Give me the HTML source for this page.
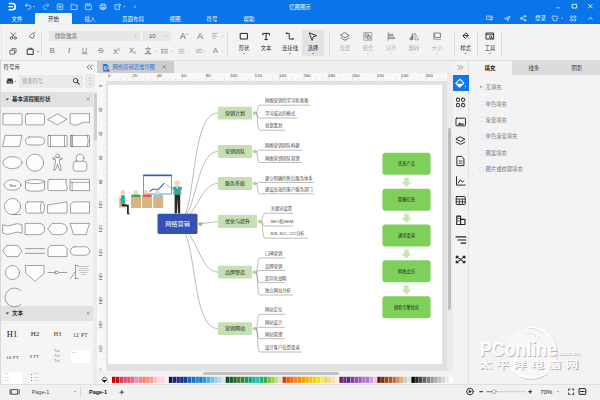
<!DOCTYPE html>
<html lang="zh-CN">
<head>
<meta charset="utf-8">
<title>亿图图示</title>
<style>
html,body{margin:0;padding:0;}
body{width:600px;height:400px;overflow:hidden;background:#f3f3f3;position:relative;
 font-family:"Liberation Sans","Noto Sans CJK SC",sans-serif;font-size:5.5px;color:#333;line-height:1;}
.abs{position:absolute;}
.t,.tl,svg text{opacity:0.99;}
.t{position:absolute;white-space:nowrap;line-height:1;transform:translate(-50%,-50%);}
.tl{position:absolute;white-space:nowrap;line-height:1;transform:translate(0,-50%);}
svg{position:absolute;left:0;top:0;overflow:visible;}
#titlebar{left:0;top:0;width:600px;height:24px;background:#0975e8;}
#ribbon{left:0;top:24px;width:600px;height:37px;background:#f3f3f3;border-bottom:1px solid #dedede;box-sizing:border-box;}
#leftpanel{left:0;top:61px;width:97px;height:323px;background:#f5f5f5;}
#doctabs{left:97px;top:61px;width:356px;height:12px;background:#efefef;}
#canvas{left:97px;top:73px;width:356px;height:298px;background:#e2e2e2;}
#page{left:108px;top:85px;width:334px;height:279px;background:#fff;}
#rightbar{left:453px;top:61px;width:16px;height:323px;background:#f3f3f3;}
#rightpanel{left:469px;top:61px;width:131px;height:323px;background:#f3f3f3;}
#status{left:0;top:384px;width:600px;height:16px;background:#f1f1f1;}
.w{color:#fff;}
.g{color:#777;}
</style>
</head>
<body>

<div class="abs" id="titlebar"></div>
<div class="abs" id="ribbon"></div>
<div class="abs" id="leftpanel"></div>
<div class="abs" id="doctabs"></div>
<div class="abs" id="canvas"></div>
<div class="abs" id="page"></div>
<div class="abs" id="rightbar"></div>
<div class="abs" id="rightpanel"></div>
<div class="abs" id="status"></div>
<div class="abs" style="left:35px;top:13px;width:37px;height:11px;background:#f3f3f3;border-radius:1px 1px 0 0;"></div>
<div class="t" style="left:17px;top:19.60px;font-size:5.5px;color:#fff;">文件</div>
<div class="t" style="left:90px;top:19.60px;font-size:5.5px;color:#fff;">插入</div>
<div class="t" style="left:133px;top:19.60px;font-size:5.5px;color:#fff;">页面布局</div>
<div class="t" style="left:175px;top:19.60px;font-size:5.5px;color:#fff;">视图</div>
<div class="t" style="left:212px;top:19.60px;font-size:5.5px;color:#fff;">符号</div>
<div class="t" style="left:249px;top:19.60px;font-size:5.5px;color:#fff;">帮助</div>
<div class="t" style="left:53.5px;top:19.60px;font-size:5.5px;color:#222;">开始</div>
<div class="t" style="left:300px;top:8.00px;font-size:5.5px;color:#fff;">亿图图示</div>
<div class="t" style="left:540.5px;top:18.90px;font-size:5.5px;color:#fff;">登录</div>
<svg width="600" height="24" viewBox="0 0 600 24" fill="none" stroke="#fff" stroke-width="0.800" stroke-linecap="round" stroke-linejoin="round">
<path d="M9.2 3.6H12.2a3.1 3.1 0 0 1 0 6.2H9.2" stroke-width="1.5"/><path d="M8.8 6.7H12.6" stroke-width="1.3"/>
<path d="M25.6 5.2h3.3a2 2 0 0 1 0 4h-1.2M27 3.6l-1.6 1.6 1.6 1.6" stroke="#cfe1fa"/><path d="M33.2 6.3h1.9l-0.95 1z" fill="#fff" stroke="none"/>
<path d="M48.6 5.2h-3.3a2 2 0 0 0 0 4h1.2M47.2 3.6l1.6 1.6-1.6 1.6" stroke="#a9c9f5"/>
<rect x="57.3" y="4" width="5.6" height="5.6" rx="1" stroke="#cfe1fa"/><path d="M60.1 5.4v2.8M58.7 6.8h2.8" stroke="#cfe1fa"/>
<path d="M71.5 4.3h2.2l0.7 0.9h2.7v4.3h-5.6z" stroke="#cfe1fa"/>
<path d="M85.8 4h4.6l0.9 0.9v4.7h-5.5z M87.2 4v1.8h2.4V4" stroke="#cfe1fa"/>
<path d="M101.4 5.3v-1.4h3.4v1.4M100.3 5.3h5.6v3h-5.6zM101.6 7.3h3v2.2h-3z" stroke="#cfe1fa"/>
<path d="M119.6 6.6v2.8h-4.6V4.6h2.4M117.6 7l2.4-2.6M118.6 4.1h1.6v1.6" stroke="#cfe1fa"/><path d="M123.3 6.3h1.9l-0.95 1z" fill="#fff" stroke="none"/>
<path d="M134 6.2h2M134.4 7.4l0.6 0.6 0.6-0.6" stroke="#a9c9f5" stroke-width="0.7"/>
<path d="M556.800 7.800h2.800" stroke-width="0.800" stroke="#d8e6fb"/><rect x="572.500" y="4.300" width="4.200" height="3.700" stroke-width="0.850"/><path d="M588.600 4.400l3.600 3.600M592.200 4.400l-3.600 3.600" stroke-width="0.800"/>
<path d="M487 16h5.2v3.4h-1v1l-1.2-1h-3z M488.8 17.2h2.6v2.6" stroke="#cfe1fa" stroke-width="0.7"/>
<path d="M505 18.6l5-2.6-2 5-0.8-2z M507.2 19l2.6-2.8" stroke="#cfe1fa" stroke-width="0.7"/>
<circle cx="521.2" cy="18.3" r="0.9" stroke="#cfe1fa"/><circle cx="525" cy="16.3" r="0.9" stroke="#cfe1fa"/><circle cx="525" cy="20.3" r="0.9" stroke="#cfe1fa"/><path d="M522 17.9l2.2-1.2M522 18.8l2.2 1.2" stroke="#cfe1fa" stroke-width="0.7"/>
<path d="M553.2 16l-1.6 1.2 0.8 1.2 0.8-0.4v2.8h3.6v-2.8l0.8 0.4 0.8-1.2-1.6-1.2q-1.8 1-3.6 0z" stroke="#cfe1fa" stroke-width="0.7"/><path d="M561.3 17.8h1.9l-0.95 1z" fill="#fff" stroke="none"/>
<circle cx="571.3" cy="16.8" r="1.1" stroke="#cfe1fa" stroke-width="0.7"/><circle cx="574.7" cy="16.8" r="1.1" stroke="#cfe1fa" stroke-width="0.7"/><circle cx="571.3" cy="20" r="1.1" stroke="#cfe1fa" stroke-width="0.7"/><circle cx="574.7" cy="20" r="1.1" stroke="#cfe1fa" stroke-width="0.7"/>
<path d="M588.6 19.2l1.8-1.8 1.8 1.8" stroke-width="0.9"/>
</svg>
<div class="abs" style="left:1px;top:25px;width:1px;height:35px;background:#e6e6e6;"></div>
<div class="abs" style="left:49px;top:30.5px;width:91px;height:10.5px;background:#e7e7e7;border-radius:1px;"></div>
<div class="abs" style="left:143px;top:30.5px;width:28px;height:10.5px;background:#e7e7e7;border-radius:1px;"></div>
<div class="tl" style="left:54.7px;top:37.00px;font-size:5.6px;color:#7a7a7a;">微软雅黑</div>
<div class="tl" style="left:149px;top:36.00px;font-size:6px;color:#555;">10</div>
<div class="abs" style="left:302px;top:30px;width:22px;height:26px;background:#e3e3e3;"></div>
<div class="abs" style="left:40.6px;top:31px;width:0.8px;height:25px;background:#dcdcdc;"></div>
<div class="abs" style="left:227.1px;top:31px;width:0.8px;height:25px;background:#dcdcdc;"></div>
<div class="abs" style="left:329.1px;top:31px;width:0.8px;height:25px;background:#dcdcdc;"></div>
<div class="abs" style="left:453.6px;top:31px;width:0.8px;height:25px;background:#dcdcdc;"></div>
<div class="abs" style="left:477.1px;top:31px;width:0.8px;height:25px;background:#dcdcdc;"></div>
<div class="abs" style="left:500.6px;top:31px;width:0.8px;height:25px;background:#dcdcdc;"></div>
<div class="t" style="left:244px;top:48.90px;font-size:5.3px;color:#333;">形状</div>
<div class="t" style="left:266px;top:49.10px;font-size:5.3px;color:#333;">文本</div>
<div class="t" style="left:290px;top:48.90px;font-size:5.3px;color:#333;">连接线</div>
<div class="t" style="left:313px;top:48.90px;font-size:5.3px;color:#222;">选择</div>
<div class="t" style="left:345px;top:48.90px;font-size:5.3px;color:#b4b4b4;">位置</div>
<div class="t" style="left:368px;top:48.90px;font-size:5.3px;color:#b4b4b4;">组合</div>
<div class="t" style="left:391px;top:48.90px;font-size:5.3px;color:#b4b4b4;">对齐</div>
<div class="t" style="left:414px;top:48.90px;font-size:5.3px;color:#b4b4b4;">翻转</div>
<div class="t" style="left:437px;top:48.90px;font-size:5.3px;color:#b4b4b4;">大小</div>
<div class="t" style="left:465.5px;top:48.90px;font-size:5.3px;color:#333;">样式</div>
<div class="t" style="left:490px;top:48.90px;font-size:5.3px;color:#333;">工具</div>
<svg width="600" height="61" viewBox="0 0 600 61" fill="none" stroke="#555" stroke-width="0.8" stroke-linecap="round" stroke-linejoin="round">
<path d="M134.6 35.5h2l-1 1.1z M165.4 35.5h2l-1 1.1z" fill="#999" stroke="none"/>
<circle cx="11.3" cy="38" r="1.2"/><circle cx="15.2" cy="38" r="1.2"/><path d="M11.9 37l3.6-4.2M14.6 37l-3.6-4.2"/>
<path d="M29.5 36.2l3.2-3.2 1.8 1.8-1.6 3.6-2.4-1zM33.5 33.6l1.6-1.6"/>
<rect x="10.4" y="50.2" width="4" height="4"/><path d="M12 50.2v-1.6h4v4h-1.6"/>
<path d="M27.6 49.2h5.6v5.2h-5.6z" stroke="#333" stroke-width="1"/><path d="M29.2 49.2v-1h2.4v1" stroke="#333"/><path d="M37 51.3h2l-1 1.1z" fill="#555" stroke="none"/>
<path d="M82 53.700h5.400M97.600 50.600h6.400M145 53.800h6" stroke="#777" stroke-width="0.600"/>
<path d="M212.4 33.4h4.6M212.4 35h3M212.4 36.6h4.6M212.4 38.2h3" stroke="#999" stroke-width="0.6"/><path d="M221.4 35.8h1.8l-0.9 1z" fill="#999" stroke="none"/>
<path d="M163.6 49.4h4M163.6 51.2h4M163.6 53h4" stroke="#888" stroke-width="0.7"/><path d="M161.6 49.4h0.6M161.6 51.2h0.6M161.6 53h0.6" stroke="#555" stroke-width="0.9"/><path d="M171 50.8h1.8l-0.9 1z" fill="#999" stroke="none"/>
<path d="M179 49.4h5M179 51.2h5M179 53h5" stroke="#aaa" stroke-width="0.7"/><path d="M187.6 50.8h1.8l-0.9 1z" fill="#bbb" stroke="none"/>
<path d="M204.2 50.8h1.8l-0.9 1z M221.4 50.8h1.8l-0.9 1z M155.4 50.8h1.8l-0.9 1z" fill="#999" stroke="none"/>
<rect x="240.6" y="33.4" width="6.8" height="5.6" stroke="#222" stroke-width="1"/>
<path d="M262.8 35v-1.6h6.6V35M266.1 33.4v6.2M264.8 39.6h2.6" stroke="#222" stroke-width="1"/>
<path d="M286.8 33.4h2.4v5.6h3.6" stroke="#222" stroke-width="0.9"/><path d="M285.8 32.6h1.4v1.4h-1.4zM292.4 38.2h1.4v1.4h-1.4z" fill="#222" stroke="none"/>
<path d="M309.6 33l7 2.6-3.2 1.2-1.2 3.2z" stroke="#222" stroke-width="0.9"/>
<path d="M243.1 53.300h1.800l-0.900 1z" fill="#333" stroke="none"/>
<path d="M289.1 53.300h1.800l-0.900 1z" fill="#333" stroke="none"/>
<path d="M312.1 53.300h1.800l-0.900 1z" fill="#333" stroke="none"/>
<path d="M344.1 53.300h1.800l-0.900 1z" fill="#bbb" stroke="none"/>
<path d="M367.1 53.300h1.800l-0.900 1z" fill="#bbb" stroke="none"/>
<path d="M390.1 53.300h1.800l-0.900 1z" fill="#bbb" stroke="none"/>
<path d="M413.1 53.300h1.800l-0.900 1z" fill="#bbb" stroke="none"/>
<path d="M436.1 53.300h1.800l-0.900 1z" fill="#bbb" stroke="none"/>
<path d="M464.6 53.300h1.800l-0.900 1z" fill="#333" stroke="none"/>
<path d="M489.1 53.300h1.800l-0.900 1z" fill="#333" stroke="none"/>
<path d="M345 32.800l4.200 2.500-4.200 2.500-4.200-2.500zM340.800 37.800l4.200 2.500 4.200-2.500" stroke="#666" stroke-width="0.850"/>
<rect x="364.2" y="32.6" width="7.6" height="7.6" stroke="#888" stroke-width="0.7"/><rect x="365.6" y="34" width="3" height="3" stroke="#666" stroke-width="0.7"/><rect x="367.4" y="35.8" width="3" height="3" stroke="#666" stroke-width="0.7"/>
<path d="M388.2 32.8v7.4" stroke="#666"/><path d="M389.6 34.2h3.4v1.4h-3.4zM389.6 37.2h5v1.4h-5z" stroke="#666" stroke-width="0.7"/>
<path d="M413 33.4v6.4h-3.2z" fill="#777" stroke="#777" stroke-width="0.5"/><path d="M415 33.4v6.4h3.2z" stroke="#777" stroke-width="0.6"/>
<rect x="435" y="33" width="5.4" height="4.6" stroke="#666" stroke-width="0.8"/><path d="M433.6 33v6.4h7" stroke="#888" stroke-width="0.7"/>
<path d="M463.2 35.6l2.6-2.8 2.6 2.6-2.8 2.6z" stroke="#222" stroke-width="0.9"/><path d="M463.2 35.6h5" stroke="#222" stroke-width="0.9"/><path d="M469 37.4q0.9 1.2 0 1.6q-0.9-0.4 0-1.6z" fill="#222" stroke="none"/>
<rect x="486.4" y="33" width="7.2" height="6" stroke="#222" stroke-width="0.9"/><path d="M486.4 34.6h7.2" stroke="#222" stroke-width="0.7"/><circle cx="490.6" cy="37" r="1.2" stroke="#222" stroke-width="0.7" fill="#f3f3f3"/><path d="M491.5 37.9l1.2 1.2" stroke="#222" stroke-width="0.8"/>
</svg>
<div class="t" style="left:52.2px;top:50.50px;font-size:8px;color:#777;">B</div>
<div class="t" style="left:69.2px;top:50.50px;font-size:8px;color:#666;font-style:italic;">I</div>
<div class="t" style="left:84.6px;top:50.20px;font-size:7px;color:#777;">U</div>
<div class="t" style="left:100.8px;top:50.50px;font-size:7.6px;color:#888;">S</div>
<div class="t" style="left:116.5px;top:51.80px;font-size:7.5px;color:#666;">X<span style="font-size:4px;vertical-align:3px">2</span></div>
<div class="t" style="left:132.5px;top:50.60px;font-size:7.5px;color:#666;">X<span style="font-size:4px;vertical-align:-1.500px">2</span></div>
<div class="t" style="left:148px;top:51.30px;font-size:6.5px;color:#666;">文</div>
<div class="t" style="left:184px;top:36.00px;font-size:8.5px;color:#555;">A<span style="font-size:4px;vertical-align:4px">+</span></div>
<div class="t" style="left:200.7px;top:36.00px;font-size:8.5px;color:#666;">A<span style="font-size:4px;vertical-align:4px">-</span></div>
<div class="t" style="left:199px;top:51.00px;font-size:6.8px;color:#aaa;">ab</div>
<div class="t" style="left:215.5px;top:50.60px;font-size:8px;color:#888;">A</div>
<div class="abs" style="left:0px;top:61px;width:1px;height:323px;background:#d8d8d8;"></div>
<div class="tl" style="left:3.5px;top:67.90px;font-size:5.5px;color:#333;">符号库</div>
<svg width="100" height="400" viewBox="0 0 100 400" fill="none" stroke="#666" stroke-width="0.7" stroke-linecap="round" stroke-linejoin="round">
<path d="M89.200 65l-2 2.200 2 2.200M92.200 65l-2 2.200 2 2.200" stroke="#555" stroke-width="0.800"/>
<path d="M7.4 78.4h5v2h-5zM6.6 80.4h6.6v3h-6.6z" fill="#333" stroke="none"/><path d="M8 82h3.8" stroke="#fff" stroke-width="0.6"/><path d="M14.6 81h1.6l-0.8 0.9z" fill="#555" stroke="none"/>
</svg>
<div class="abs" style="left:18.5px;top:75px;width:64.5px;height:12.5px;background:#eaeaea;border-radius:1px;"></div>
<div class="tl" style="left:22px;top:81.90px;font-size:5.2px;color:#999;">搜索符号</div>
<svg width="100" height="400" viewBox="0 0 100 400" fill="none" stroke="#333" stroke-width="0.9" stroke-linecap="round">
<circle cx="75.6" cy="80.6" r="2.2"/><path d="M77.3 82.3l1.9 1.9" stroke-width="1.1"/>
<rect x="86" y="75" width="8" height="5.6" rx="1.2" stroke="#d4d4d4" stroke-width="0.6" fill="#f0f0f0"/><rect x="86" y="81.6" width="8" height="5.6" rx="1.2" stroke="#d4d4d4" stroke-width="0.6" fill="#f0f0f0"/>
<path d="M88.8 78.5l1.2-1.2 1.2 1.2M88.8 83.8l1.2 1.2 1.2-1.2" stroke="#888" stroke-width="0.6"/>
</svg>
<div class="abs" style="left:1px;top:92px;width:92px;height:15px;background:#e2e2e2;"></div>
<div class="tl" style="left:12px;top:99.50px;font-size:5.5px;color:#333;font-weight:bold;">基本流程图形状</div>
<div class="abs" style="left:1px;top:306px;width:92px;height:15px;background:#e2e2e2;"></div>
<div class="tl" style="left:12px;top:313.50px;font-size:5.5px;color:#333;font-weight:bold;">文本</div>
<div class="abs" style="left:93px;top:92px;width:4px;height:292px;background:#ececec;"></div>
<div class="abs" style="left:93.5px;top:92.5px;width:3px;height:48.5px;background:#d0d0d0;border-radius:1.400px;"></div>
<svg width="100" height="400" viewBox="0 0 100 400" fill="none" stroke="#777" stroke-width="0.6" stroke-linecap="round">
<path d="M5.6 98.4h3.4l-1.7 2.2z M5.6 312.4h3.4l-1.7 2.2z" fill="#444" stroke="none"/>
<path d="M87 98l2.4 2.4M89.400 98l-2.4 2.4 M87 312l2.4 2.4M89.4 312l-2.4 2.4"/>
</svg>
<svg width="100" height="400" viewBox="0 0 100 400" fill="#fdfdfd" stroke="#5a5a5a" stroke-width="0.55" stroke-linejoin="round" stroke-linecap="round">
<g transform="translate(12.5 119.3)"><rect x="-9.5" y="-5.6" width="19" height="11.2" rx="0.8"/></g>
<g transform="translate(35 119.3)"><rect x="-9.5" y="-5.6" width="19" height="11.2" rx="2"/></g>
<g transform="translate(57.5 119.3)"><path d="M-9.5 0L0-5.4 9.5 0 0 5.4z"/></g>
<g transform="translate(80 119.3)"><path d="M-9.5-5.6h19V3.4q-4.5-2-9.5 1t-9.500 0z"/></g>
<g transform="translate(12.5 141)"><path d="M-7-5.6h16.500l-2.500 11.200h-16.500z"/></g>
<g transform="translate(35 141)"><rect x="-9.5" y="-4" width="19" height="8" rx="4"/></g>
<g transform="translate(57.5 141)"><rect x="-9.5" y="-5.6" width="19" height="11.2" rx="0.5"/><path d="M-7-5.6v11.200M7-5.600v11.200"/></g>
<g transform="translate(80 141)"><rect x="-9.5" y="-5.6" width="19" height="11.2" rx="0.5"/><path d="M-8.500-5.600q2 5.600 0 11.200M-7.300-5.600q-2 5.600 0 11.200M7.300-5.600q2 5.600 0 11.200"/></g>
<g transform="translate(12.5 162.7)"><ellipse cx="0" cy="0" rx="9.6" ry="6"/></g>
<g transform="translate(35 162.7)"><circle cx="0" cy="0" r="8.6"/></g>
<g transform="translate(57.5 162.7)"><circle cx="0" cy="-7" r="1.8"/><path d="M-1.600-5h3.200l3 0.500 0 1.200-2.600 0 0 3.300 2 7.500-1.800 0-2.200-6-2.200 6-1.800 0 2-7.500 0-3.300-2.600 0 0-1.200z"/></g>
<g transform="translate(80 162.7)"><circle cx="0" cy="-4.500" r="4"/><rect x="-6.800" y="-1.500" width="13.600" height="10" rx="2.800"/></g>
<g transform="translate(12.5 185)"><ellipse cx="0" cy="0" rx="8.400" ry="5.200"/></g>
<g transform="translate(35 185)"><path d="M-9.500-3.400v7.400q0 2.200 9.500 2.200t9.500-2.200v-7.400"/><ellipse cx="0" cy="-3.400" rx="9.500" ry="2"/></g>
<g transform="translate(57.5 185)"><path d="M-8-5.600h17q-1.600 2.800 0 5.600t0 5.600h-17q-1.600 0-1.600-1.600v-8q0-1.600 1.600-1.600z"/></g>
<g transform="translate(80 185)"><rect x="-9.500" y="-5.600" width="19" height="11.200"/><path d="M-9.500-2.600h19M-7.800-2.600v8.200" stroke-width="0.500"/></g>
<g transform="translate(12.5 207.5)"><circle cx="0" cy="-1" r="8"/><path d="M0 7h8"/></g>
<g transform="translate(35 207.5)"><path d="M-7.500-5.600h15q2 0 2 5.600t-2 5.600h-15q-2 0-2-5.600t2-5.600z"/><path d="M7.500-5.600q-2 0-2 5.600t2 5.600"/></g>
<g transform="translate(57.5 207.5)"><path d="M-9.500-2.600l19-3v11.200h-19z"/></g>
<g transform="translate(80 207.5)"><path d="M-6.500-5.600h16v11.200h-19v-8.200z"/></g>
<g transform="translate(12.5 229)"><path d="M-9.500-4.200q4.500 2.400 9.500 0t9.500 0v8.400q-4.500-2.400-9.500 0t-9.500 0z"/></g>
<g transform="translate(35 229)"><path d="M-9.500-5.600h13q6 0 6 5.600t-6 5.600h-13z"/></g>
<g transform="translate(57.5 229)"><path d="M-5-5.600h9q5.500 1.600 5.500 5.600t-5.500 5.600h-9l-4.500-5.600z"/></g>
<g transform="translate(80 229)"><path d="M-9.500-5.600h19l-3.500 11.200h-12z"/></g>
<g transform="translate(12.5 251)"><path d="M-5.500-5.600h11l4 5.600-4 5.600h-11l-4-5.600z"/></g>
<g transform="translate(35 251)"><path d="M-9.500-2.400h19M-9.500 2.400h19" fill="none"/></g>
<g transform="translate(57.5 251)"><path d="M-6.500-5.600h13l3 3v8.200h-19v-8.200z"/></g>
<g transform="translate(80 251)"><rect x="-9.500" y="-4.200" width="19" height="8.400" rx="4.200"/></g>
<g transform="translate(12.5 272.5)"><circle cx="0" cy="0" r="7"/></g>
<g transform="translate(35 272.5)"><path d="M-9-7h18v8l-9 8-9-8z"/></g>
<g transform="translate(57.5 272.5)"><path d="M-9.500 0h7.500M1.500 0h8" fill="none"/><path d="M-2-1.400l2.500 0.400q1 1 0 2l-2.500 0.400z"/></g>
<g transform="translate(80 272.5)"><path d="M-4.500-7v13M-4.500-7h2.500M-4.500 6h2.500M-9.500 6l5-7" fill="none"/></g>
<g transform="translate(12.5 296)"><path d="M8.500-5.500a9.500 9.500 0 1 0 0 14" fill="none"/></g>
</svg>
<div class="t" style="left:12.5px;top:185.70px;font-size:4.4px;color:#333;">Yes</div>
<div class="t" style="left:83.5px;top:266.80px;font-size:1.9px;color:#666;">Use this side</div>
<div class="t" style="left:83.5px;top:268.80px;font-size:1.9px;color:#666;">bracket to</div>
<div class="t" style="left:83.5px;top:270.80px;font-size:1.9px;color:#666;">add notes to</div>
<div class="t" style="left:83.5px;top:272.80px;font-size:1.9px;color:#666;">your flow-</div>
<div class="t" style="left:83.5px;top:274.80px;font-size:1.9px;color:#666;">chart.</div>
<div class="t" style="left:12px;top:334.20px;font-size:8.5px;color:#111;font-family:'Liberation Serif','Noto Serif CJK SC',serif;">H1</div>
<div class="t" style="left:35px;top:334.00px;font-size:7px;color:#222;font-family:'Liberation Serif','Noto Serif CJK SC',serif;">H2</div>
<div class="t" style="left:57.5px;top:334.00px;font-size:6px;color:#333;font-family:'Liberation Serif','Noto Serif CJK SC',serif;">H3</div>
<div class="t" style="left:80.5px;top:335.80px;font-size:5.6px;color:#333;font-family:'Liberation Serif','Noto Serif CJK SC',serif;letter-spacing:0.300px;">12 PT</div>
<div class="t" style="left:12.5px;top:358.10px;font-size:4.8px;color:#333;font-family:'Liberation Serif','Noto Serif CJK SC',serif;letter-spacing:0.300px;">10 PT</div>
<div class="t" style="left:34.5px;top:357.00px;font-size:4.4px;color:#333;font-family:'Liberation Serif','Noto Serif CJK SC',serif;letter-spacing:0.300px;">9 PT</div>
<div class="t" style="left:57px;top:352.30px;font-size:3.2px;color:#777;font-family:'Liberation Serif','Noto Serif CJK SC',serif;">Text</div>
<div class="t" style="left:57px;top:357.00px;font-size:3.2px;color:#777;font-family:'Liberation Serif','Noto Serif CJK SC',serif;">Text</div>
<div class="t" style="left:57px;top:361.50px;font-size:3.2px;color:#777;font-family:'Liberation Serif','Noto Serif CJK SC',serif;">Text</div>
<div class="abs" style="left:71px;top:349.5px;width:19px;height:13.5px;background:#fff;"></div>
<div class="t" style="left:74px;top:352.80px;font-size:2.4px;color:#777;font-family:'Liberation Serif','Noto Serif CJK SC',serif;">Text</div>
<div class="abs" style="left:2.5px;top:371.5px;width:19px;height:12px;background:#fff;"></div>
<div class="t" style="left:6.5px;top:374.40px;font-size:2.6px;color:#777;font-family:'Liberation Serif','Noto Serif CJK SC',serif;">Text</div>
<div class="t" style="left:6.5px;top:377.60px;font-size:2.6px;color:#777;font-family:'Liberation Serif','Noto Serif CJK SC',serif;">Text</div>
<div class="t" style="left:6.5px;top:380.80px;font-size:2.6px;color:#777;font-family:'Liberation Serif','Noto Serif CJK SC',serif;">Text</div>
<div class="t" style="left:36.5px;top:374.40px;font-size:2.8px;color:#888;font-family:'Liberation Serif','Noto Serif CJK SC',serif;">Text</div>
<div class="abs" style="left:30.6px;top:374px;width:0.8px;height:0.8px;background:#444;border-radius:50%;"></div>
<div class="t" style="left:36.5px;top:377.60px;font-size:2.8px;color:#888;font-family:'Liberation Serif','Noto Serif CJK SC',serif;">Text</div>
<div class="abs" style="left:30.6px;top:377.2px;width:0.8px;height:0.8px;background:#444;border-radius:50%;"></div>
<div class="t" style="left:36.5px;top:380.80px;font-size:2.8px;color:#888;font-family:'Liberation Serif','Noto Serif CJK SC',serif;">Text</div>
<div class="abs" style="left:30.6px;top:380.4px;width:0.8px;height:0.8px;background:#444;border-radius:50%;"></div>
<div class="abs" style="left:97px;top:61px;width:76.5px;height:11.5px;background:#cdcdcd;"></div>
<svg width="600" height="80" viewBox="0 0 600 80">
<path d="M103.200 64h3.400l1.800 1.800v5.600h-5.200z" fill="#1a73e8"/><path d="M104.600 66.600h1.400a1.300 1.300 0 0 1 0 2.800h-1.400z" fill="none" stroke="#fff" stroke-width="0.700"/><circle cx="108.600" cy="70.600" r="1.100" fill="#e02020"/>
<path d="M162.800 65.400l3 3M165.800 65.400l-3 3" stroke="#555" stroke-width="0.600" fill="none"/>
</svg>
<div class="tl" style="left:112.5px;top:68.40px;font-size:5.3px;color:#1a73e8;">网络营销思维导图</div>
<div class="abs" style="left:105.5px;top:73px;width:341.5px;height:7.5px;background:#f8f8f8;"></div>
<div class="abs" style="left:97px;top:73px;width:8.5px;height:298px;background:#f8f8f8;"></div>
<div class="abs" style="left:97px;top:73px;width:8.5px;height:7.5px;background:#f4f4f4;"></div>
<svg width="600" height="400" viewBox="0 0 600 400" fill="none" stroke="#c8c8c8" stroke-width="0.400">
<path d="M108.50 73.500v7M114.61 78.200v2.300M120.71 78.200v2.300M126.81 78.200v2.300M132.92 73.500v7M139.03 78.200v2.300M145.13 78.200v2.300M151.24 78.200v2.300M157.34 73.500v7M163.44 78.200v2.300M169.55 78.200v2.300M175.66 78.200v2.300M181.76 73.500v7M187.87 78.200v2.300M193.97 78.200v2.300M200.07 78.200v2.300M206.18 73.500v7M212.29 78.200v2.300M218.39 78.200v2.300M224.50 78.200v2.300M230.60 73.500v7M236.71 78.200v2.300M242.81 78.200v2.300M248.92 78.200v2.300M255.02 73.500v7M261.12 78.200v2.300M267.23 78.200v2.300M273.34 78.200v2.300M279.44 73.500v7M285.55 78.200v2.300M291.65 78.200v2.300M297.75 78.200v2.300M303.86 73.500v7M309.97 78.200v2.300M316.07 78.200v2.300M322.18 78.200v2.300M328.28 73.500v7M334.38 78.200v2.300M340.49 78.200v2.300M346.60 78.200v2.300M352.70 73.500v7M358.81 78.200v2.300M364.91 78.200v2.300M371.02 78.200v2.300M377.12 73.500v7M383.23 78.200v2.300M389.33 78.200v2.300M395.44 78.200v2.300M401.54 73.500v7M407.65 78.200v2.300M413.75 78.200v2.300M419.86 78.200v2.300M425.96 73.500v7M432.06 78.200v2.300M438.17 78.200v2.300M444.28 78.200v2.300M98 85.30h7.500M103 91.26h2.500M103 97.22h2.500M103 103.19h2.500M98 109.15h7.500M103 115.11h2.500M103 121.08h2.500M103 127.04h2.500M98 133.00h7.500M103 138.96h2.500M103 144.93h2.500M103 150.89h2.500M98 156.85h7.500M103 162.81h2.500M103 168.78h2.500M103 174.74h2.500M98 180.70h7.500M103 186.66h2.500M103 192.62h2.500M103 198.59h2.500M98 204.55h7.500M103 210.51h2.500M103 216.48h2.500M103 222.44h2.500M98 228.40h7.500M103 234.36h2.500M103 240.32h2.500M103 246.29h2.500M98 252.25h7.500M103 258.21h2.500M103 264.18h2.500M103 270.14h2.500M98 276.10h7.500M103 282.06h2.500M103 288.03h2.500M103 293.99h2.500M98 299.95h7.500M103 305.91h2.500M103 311.88h2.500M103 317.84h2.500M98 323.80h7.500M103 329.76h2.500M103 335.73h2.500M103 341.69h2.500M98 347.65h7.500M103 353.61h2.500M103 359.58h2.500"/>
</svg>
<div class="tl" style="left:108.3px;top:76.00px;font-size:4.2px;color:#444;">0</div>
<div class="tl" style="left:132.72px;top:76.00px;font-size:4.2px;color:#444;">20</div>
<div class="tl" style="left:157.14px;top:76.00px;font-size:4.2px;color:#444;">40</div>
<div class="tl" style="left:181.56px;top:76.00px;font-size:4.2px;color:#444;">60</div>
<div class="tl" style="left:205.98px;top:76.00px;font-size:4.2px;color:#444;">80</div>
<div class="tl" style="left:230.4px;top:76.00px;font-size:4.2px;color:#444;">100</div>
<div class="tl" style="left:254.82px;top:76.00px;font-size:4.2px;color:#444;">120</div>
<div class="tl" style="left:279.24px;top:76.00px;font-size:4.2px;color:#444;">140</div>
<div class="tl" style="left:303.66px;top:76.00px;font-size:4.2px;color:#444;">160</div>
<div class="tl" style="left:328.08px;top:76.00px;font-size:4.2px;color:#444;">180</div>
<div class="tl" style="left:352.5px;top:76.00px;font-size:4.2px;color:#444;">200</div>
<div class="tl" style="left:376.92px;top:76.00px;font-size:4.2px;color:#444;">220</div>
<div class="tl" style="left:401.34px;top:76.00px;font-size:4.2px;color:#444;">240</div>
<div class="tl" style="left:425.76px;top:76.00px;font-size:4.2px;color:#444;">260</div>
<div class="t" style="left:100.8px;top:86.20px;font-size:4.2px;color:#444;transform:translate(-50%,-50%) rotate(-90deg);">0</div>
<div class="t" style="left:100.8px;top:110.05px;font-size:4.2px;color:#444;transform:translate(-50%,-50%) rotate(-90deg);">20</div>
<div class="t" style="left:100.8px;top:133.90px;font-size:4.2px;color:#444;transform:translate(-50%,-50%) rotate(-90deg);">40</div>
<div class="t" style="left:100.8px;top:157.75px;font-size:4.2px;color:#444;transform:translate(-50%,-50%) rotate(-90deg);">60</div>
<div class="t" style="left:100.8px;top:181.60px;font-size:4.2px;color:#444;transform:translate(-50%,-50%) rotate(-90deg);">80</div>
<div class="t" style="left:100.8px;top:205.45px;font-size:4.2px;color:#444;transform:translate(-50%,-50%) rotate(-90deg);">100</div>
<div class="t" style="left:100.8px;top:229.30px;font-size:4.2px;color:#444;transform:translate(-50%,-50%) rotate(-90deg);">120</div>
<div class="t" style="left:100.8px;top:253.15px;font-size:4.2px;color:#444;transform:translate(-50%,-50%) rotate(-90deg);">140</div>
<div class="t" style="left:100.8px;top:277.00px;font-size:4.2px;color:#444;transform:translate(-50%,-50%) rotate(-90deg);">160</div>
<div class="t" style="left:100.8px;top:300.85px;font-size:4.2px;color:#444;transform:translate(-50%,-50%) rotate(-90deg);">180</div>
<div class="t" style="left:100.8px;top:324.70px;font-size:4.2px;color:#444;transform:translate(-50%,-50%) rotate(-90deg);">200</div>
<div class="t" style="left:100.8px;top:348.55px;font-size:4.2px;color:#444;transform:translate(-50%,-50%) rotate(-90deg);">220</div>
<div class="abs" style="left:447px;top:73px;width:6px;height:298px;background:#ececec;"></div>
<div class="abs" style="left:448.3px;top:128px;width:2.8px;height:182px;background:#bdbdbd;border-radius:1.400px;"></div>
<div class="abs" style="left:104px;top:371px;width:343px;height:5.5px;background:#ececec;"></div>
<div class="abs" style="left:202.5px;top:371.8px;width:136px;height:3.4px;background:#c2c2c2;border-radius:1.700px;"></div>
<div class="abs" style="left:97px;top:371px;width:356px;height:13px;background:#f1f1f1;z-index:0;"></div>
<div class="abs" style="left:202.5px;top:371.8px;width:136px;height:3.4px;background:#c2c2c2;border-radius:1.700px;"></div>
<div class="abs" style="left:97px;top:376.5px;width:356px;height:7px;background:#f8f8f8;"></div>
<svg width="600" height="400" viewBox="0 0 600 400" shape-rendering="auto">
<rect x="112.00" y="376.800" width="3.450" height="6.100" fill="#c00000"/>
<rect x="115.79" y="376.800" width="3.450" height="6.100" fill="#d9001b"/>
<rect x="119.58" y="376.800" width="3.450" height="6.100" fill="#c8446a"/>
<rect x="123.37" y="376.800" width="3.450" height="6.100" fill="#d95070"/>
<rect x="127.16" y="376.800" width="3.450" height="6.100" fill="#e8566a"/>
<rect x="130.95" y="376.800" width="3.450" height="6.100" fill="#e86a88"/>
<rect x="134.74" y="376.800" width="3.450" height="6.100" fill="#e890b0"/>
<rect x="138.53" y="376.800" width="3.450" height="6.100" fill="#f08496"/>
<rect x="142.32" y="376.800" width="3.450" height="6.100" fill="#f08080"/>
<rect x="146.11" y="376.800" width="3.450" height="6.100" fill="#f89272"/>
<rect x="149.90" y="376.800" width="3.450" height="6.100" fill="#f0a0a0"/>
<rect x="153.69" y="376.800" width="3.450" height="6.100" fill="#f8c0c0"/>
<rect x="157.48" y="376.800" width="3.450" height="6.100" fill="#f0d8e8"/>
<rect x="161.27" y="376.800" width="3.450" height="6.100" fill="#ffd2e0"/>
<rect x="165.06" y="376.800" width="3.450" height="6.100" fill="#ffe8f0"/>
<rect x="168.85" y="376.800" width="3.450" height="6.100" fill="#0a1a50"/>
<rect x="172.64" y="376.800" width="3.450" height="6.100" fill="#1a2a70"/>
<rect x="176.43" y="376.800" width="3.450" height="6.100" fill="#2c2a84"/>
<rect x="180.22" y="376.800" width="3.450" height="6.100" fill="#103080"/>
<rect x="184.01" y="376.800" width="3.450" height="6.100" fill="#1040a0"/>
<rect x="187.80" y="376.800" width="3.450" height="6.100" fill="#2060b0"/>
<rect x="191.59" y="376.800" width="3.450" height="6.100" fill="#2070c0"/>
<rect x="195.38" y="376.800" width="3.450" height="6.100" fill="#3080d0"/>
<rect x="199.17" y="376.800" width="3.450" height="6.100" fill="#0a80d0"/>
<rect x="202.96" y="376.800" width="3.450" height="6.100" fill="#20a0e0"/>
<rect x="206.75" y="376.800" width="3.450" height="6.100" fill="#40b0f0"/>
<rect x="210.54" y="376.800" width="3.450" height="6.100" fill="#70c0f0"/>
<rect x="214.33" y="376.800" width="3.450" height="6.100" fill="#90d0f0"/>
<rect x="218.12" y="376.800" width="3.450" height="6.100" fill="#b0d8f4"/>
<rect x="221.91" y="376.800" width="3.450" height="6.100" fill="#d0e8f8"/>
<rect x="225.70" y="376.800" width="3.450" height="6.100" fill="#0c4a2a"/>
<rect x="229.49" y="376.800" width="3.450" height="6.100" fill="#1a5a30"/>
<rect x="233.28" y="376.800" width="3.450" height="6.100" fill="#2a6a3a"/>
<rect x="237.07" y="376.800" width="3.450" height="6.100" fill="#4a7a2a"/>
<rect x="240.86" y="376.800" width="3.450" height="6.100" fill="#2a8a3a"/>
<rect x="244.65" y="376.800" width="3.450" height="6.100" fill="#20a040"/>
<rect x="248.44" y="376.800" width="3.450" height="6.100" fill="#10a080"/>
<rect x="252.23" y="376.800" width="3.450" height="6.100" fill="#20b0a0"/>
<rect x="256.02" y="376.800" width="3.450" height="6.100" fill="#30c0b0"/>
<rect x="259.81" y="376.800" width="3.450" height="6.100" fill="#20b070"/>
<rect x="263.60" y="376.800" width="3.450" height="6.100" fill="#30b050"/>
<rect x="267.39" y="376.800" width="3.450" height="6.100" fill="#80c030"/>
<rect x="271.18" y="376.800" width="3.450" height="6.100" fill="#a0d040"/>
<rect x="274.97" y="376.800" width="3.450" height="6.100" fill="#c0e080"/>
<rect x="278.76" y="376.800" width="3.450" height="6.100" fill="#d0ecd0"/>
<rect x="282.55" y="376.800" width="3.450" height="6.100" fill="#d83a10"/>
<rect x="286.34" y="376.800" width="3.450" height="6.100" fill="#e85a10"/>
<rect x="290.13" y="376.800" width="3.450" height="6.100" fill="#f07010"/>
<rect x="293.92" y="376.800" width="3.450" height="6.100" fill="#f08a30"/>
<rect x="297.71" y="376.800" width="3.450" height="6.100" fill="#f09010"/>
<rect x="301.50" y="376.800" width="3.450" height="6.100" fill="#f8a000"/>
<rect x="305.29" y="376.800" width="3.450" height="6.100" fill="#f8b000"/>
<rect x="309.08" y="376.800" width="3.450" height="6.100" fill="#f8c000"/>
<rect x="312.87" y="376.800" width="3.450" height="6.100" fill="#f8d000"/>
<rect x="316.66" y="376.800" width="3.450" height="6.100" fill="#f8e000"/>
<rect x="320.45" y="376.800" width="3.450" height="6.100" fill="#f8e850"/>
<rect x="324.24" y="376.800" width="3.450" height="6.100" fill="#f8d060"/>
<rect x="328.03" y="376.800" width="3.450" height="6.100" fill="#f8d890"/>
<rect x="331.82" y="376.800" width="3.450" height="6.100" fill="#f8e0b0"/>
<rect x="335.61" y="376.800" width="3.450" height="6.100" fill="#fff0d0"/>
<rect x="339.40" y="376.800" width="3.450" height="6.100" fill="#6a1a7a"/>
<rect x="343.19" y="376.800" width="3.450" height="6.100" fill="#7a2a8a"/>
<rect x="346.98" y="376.800" width="3.450" height="6.100" fill="#5a2a9a"/>
<rect x="350.77" y="376.800" width="3.450" height="6.100" fill="#8040a0"/>
<rect x="354.56" y="376.800" width="3.450" height="6.100" fill="#9a50b0"/>
<rect x="358.35" y="376.800" width="3.450" height="6.100" fill="#a060b0"/>
<rect x="362.14" y="376.800" width="3.450" height="6.100" fill="#c070c0"/>
<rect x="365.93" y="376.800" width="3.450" height="6.100" fill="#9a80d0"/>
<rect x="369.72" y="376.800" width="3.450" height="6.100" fill="#d0a0d8"/>
<rect x="373.51" y="376.800" width="3.450" height="6.100" fill="#e8c8e8"/>
<rect x="377.30" y="376.800" width="3.450" height="6.100" fill="#5a2008"/>
<rect x="381.09" y="376.800" width="3.450" height="6.100" fill="#7a3010"/>
<rect x="384.88" y="376.800" width="3.450" height="6.100" fill="#9a4a18"/>
<rect x="388.67" y="376.800" width="3.450" height="6.100" fill="#a85a20"/>
<rect x="392.46" y="376.800" width="3.450" height="6.100" fill="#c07030"/>
<rect x="396.25" y="376.800" width="3.450" height="6.100" fill="#c89060"/>
<rect x="400.04" y="376.800" width="3.450" height="6.100" fill="#e0b080"/>
<rect x="403.83" y="376.800" width="3.450" height="6.100" fill="#d8d0c8"/>
<rect x="407.62" y="376.800" width="3.450" height="6.100" fill="#e0e0dc"/>
<rect x="411.41" y="376.800" width="3.450" height="6.100" fill="#000000"/>
<rect x="415.20" y="376.800" width="3.450" height="6.100" fill="#2a2a2a"/>
<rect x="418.99" y="376.800" width="3.450" height="6.100" fill="#4a4a4a"/>
<rect x="422.78" y="376.800" width="3.450" height="6.100" fill="#666666"/>
<rect x="426.57" y="376.800" width="3.450" height="6.100" fill="#808080"/>
<rect x="430.36" y="376.800" width="3.450" height="6.100" fill="#999999"/>
<rect x="434.15" y="376.800" width="3.450" height="6.100" fill="#adadad"/>
<rect x="437.94" y="376.800" width="3.450" height="6.100" fill="#c2c2c2"/>
<rect x="441.73" y="376.800" width="3.450" height="6.100" fill="#d6d6d6"/>
<rect x="445.52" y="376.800" width="3.450" height="6.100" fill="#eaeaea"/>
<rect x="449.31" y="376.800" width="3.450" height="6.100" fill="#ffffff"/>
</svg>
<svg width="600" height="400" viewBox="0 0 600 400" fill="none" stroke="#111" stroke-width="0.800" stroke-linejoin="round">
<path d="M101.800 379.800l2.700-2.900 2.700 2.700-2.900 2.700z"/><path d="M102.200 380h5l-2.600 2.300z" fill="#111" stroke="none"/><path d="M108 381.400q0.800 1.100 0 1.500q-0.800-0.400 0-1.500z" fill="#111" stroke="none"/>
<rect x="99.600" y="368.600" width="2" height="1.800" fill="#fff" stroke="#8aa0c0" stroke-width="0.400"/>
</svg>
<div class="abs" style="left:468.4px;top:61px;width:0.8px;height:323px;background:#e2e2e2;"></div>
<div class="abs" style="left:453px;top:75px;width:15.7px;height:16px;background:#0f77ee;"></div>
<div class="abs" style="left:512px;top:61px;width:88px;height:14px;background:#dcdcdc;"></div>
<div class="t" style="left:490px;top:69.40px;font-size:5.4px;color:#222;font-weight:bold;">填充</div>
<div class="t" style="left:534px;top:69.40px;font-size:5.4px;color:#333;">线条</div>
<div class="t" style="left:577px;top:69.40px;font-size:5.4px;color:#333;">阴影</div>
<svg width="600" height="400" viewBox="0 0 600 400" fill="none" stroke="#222" stroke-width="0.800" stroke-linejoin="round" stroke-linecap="round">
<path d="M458.200 65.600l1.800 1.900-1.800 1.900M461 65.600l1.800 1.900-1.800 1.900" stroke="#666" stroke-width="0.750"/>
<g transform="translate(460.400 83.300) scale(1.350) translate(-460.400 -83.300)"><path d="M457 83.400l3-3.200 3 3-3.200 3z" stroke="#fff" stroke-width="0.800"/><path d="M457.400 83.600h5.200l-2.800 2.400z" fill="#fff" stroke="none"/><path d="M464.200 85q0.800 1.100 0 1.500q-0.800-0.400 0-1.500z" fill="#fff" stroke="none"/></g>
<g transform="translate(460.600 102.6) scale(1.280) translate(-460.600 -102.6)" stroke-width="0.750">
<rect x="457.400" y="99.2" width="2.400" height="2.400" rx="0.500"/><rect x="461.400" y="99.2" width="2.400" height="2.400" rx="0.500"/><rect x="457.400" y="103.4" width="2.400" height="2.400" rx="0.500"/><rect x="461.400" y="103.4" width="2.400" height="2.400" rx="0.500"/>
</g>
<g transform="translate(460.600 122) scale(1.280) translate(-460.600 -122)" stroke-width="0.750">
<rect x="457" y="119" width="7.400" height="6" rx="0.600"/><path d="M458.200 124.2l1.600-1.800 1.400 1.200 1-0.800 1.200 1.400z" fill="#222" stroke="none"/>
</g>
<g transform="translate(460.600 141.3) scale(1.280) translate(-460.600 -141.3)" stroke-width="0.750">
<path d="M460.600 137.9l3.400 1.800-3.400 1.800-3.400-1.800zM457.200 141.9l3.400 1.800 3.400-1.800"/>
</g>
<g transform="translate(460.600 161) scale(1.280) translate(-460.600 -161)" stroke-width="0.750">
<path d="M458 157.4h3.400l1.800 1.800v5.400h-5.200z"/><path d="M459.400 161h2.400M459.400 162.6h2.400" stroke-width="0.600"/>
</g>
<g transform="translate(460.600 181) scale(1.280) translate(-460.600 -181)" stroke-width="0.750">
<path d="M457.400 177.6v6.600h6.800"/><path d="M458.800 182.6l1.600-2.600 1.400 1.800 1.400-0.800" stroke-width="0.700"/>
</g>
<g transform="translate(460.600 200.5) scale(1.280) translate(-460.600 -200.5)" stroke-width="0.750">
<rect x="457.200" y="197.4" width="7" height="6.200" rx="0.500"/><path d="M457.200 199.4h7M457.200 201.5h7M459.600 199.4v4.200M462 199.4v4.200" stroke-width="0.600"/>
</g>
<g transform="translate(460.600 220.3) scale(1.280) translate(-460.600 -220.3)" stroke-width="0.750">
<path d="M457.600 217h3v6.600h-3zM460.600 219.6h3.400v4h-3.400" stroke-width="0.900"/><path d="M458.600 218.7h1M458.600 220.7h1" stroke-width="0.600"/>
</g>
<g transform="translate(460.600 240) scale(1.280) translate(-460.600 -240)" stroke-width="0.750">
<path d="M457 237.6h7.600M458.600 240h6M461 242.4h3.600" stroke-width="0.900"/>
</g>
<g transform="translate(460.600 259.5) scale(1.280) translate(-460.600 -259.5)" stroke-width="0.750">
<path d="M457.200 257l6.800 5M457.200 262l6.800-5M457.200 257h1.600M457.200 257v1.400M464 257h-1.600M464 257v1.400M457.200 262h1.600M457.200 262v-1.400M464 262h-1.600M464 262v-1.400" stroke-width="0.800"/>
</g>
</svg>
<div class="abs" style="left:478.5px;top:84.5px;width:5px;height:5px;background:#fcfcfc;border-radius:50%;border:0.500px solid #e2e2e2;box-sizing:border-box;"></div>
<div class="abs" style="left:480.2px;top:86.2px;width:1.6px;height:1.6px;background:#aaa;border-radius:50%;"></div>
<div class="tl" style="left:485.6px;top:88.00px;font-size:5.3px;color:#777;">无填充</div>
<div class="abs" style="left:478.5px;top:100.96px;width:5px;height:5px;background:#fcfcfc;border-radius:50%;border:0.500px solid #e2e2e2;box-sizing:border-box;"></div>
<div class="tl" style="left:485.6px;top:104.92px;font-size:5.3px;color:#777;">单色填充</div>
<div class="abs" style="left:478.5px;top:117.42px;width:5px;height:5px;background:#fcfcfc;border-radius:50%;border:0.500px solid #e2e2e2;box-sizing:border-box;"></div>
<div class="tl" style="left:485.6px;top:120.84px;font-size:5.3px;color:#777;">渐变填充</div>
<div class="abs" style="left:478.5px;top:133.88px;width:5px;height:5px;background:#fcfcfc;border-radius:50%;border:0.500px solid #e2e2e2;box-sizing:border-box;"></div>
<div class="tl" style="left:485.6px;top:137.14px;font-size:5.3px;color:#777;">单色渐变填充</div>
<div class="abs" style="left:478.5px;top:150.34px;width:5px;height:5px;background:#fcfcfc;border-radius:50%;border:0.500px solid #e2e2e2;box-sizing:border-box;"></div>
<div class="tl" style="left:485.6px;top:153.68px;font-size:5.3px;color:#777;">图案填充</div>
<div class="abs" style="left:478.5px;top:166.8px;width:5px;height:5px;background:#fcfcfc;border-radius:50%;border:0.500px solid #e2e2e2;box-sizing:border-box;"></div>
<div class="tl" style="left:485.6px;top:169.90px;font-size:5.3px;color:#777;">图片或纹理填充</div>
<svg width="600" height="400" viewBox="0 0 600 400" fill="none">
<circle cx="531" cy="353" r="25.500" fill="#f7f7f7"/>
<path d="M525.59 327.57A26.00 26.00 0 0 1 555.11 362.74A28.83 28.83 0 0 0 525.59 327.57zM549.06 371.70A26.00 26.00 0 0 1 505.02 353.91A28.88 28.88 0 0 0 549.06 371.70z" fill="#c4c4c4" transform="translate(0.700 0.800)"/>
<path d="M525.59 327.57A26.00 26.00 0 0 1 555.11 362.74A28.83 28.83 0 0 0 525.59 327.57zM549.06 371.70A26.00 26.00 0 0 1 505.02 353.91A28.88 28.88 0 0 0 549.06 371.70z" fill="#fefefe"/>
<circle cx="525.5" cy="332.9" r="0.900" fill="#c9c9c9"/><circle cx="525" cy="332.3" r="0.900" fill="#fefefe"/>
<circle cx="528.8" cy="333.4" r="0.900" fill="#c9c9c9"/><circle cx="528.3" cy="332.8" r="0.900" fill="#fefefe"/>
<circle cx="532.1" cy="334.2" r="0.900" fill="#c9c9c9"/><circle cx="531.6" cy="333.6" r="0.900" fill="#fefefe"/>
<circle cx="535.3" cy="335.4" r="0.900" fill="#c9c9c9"/><circle cx="534.8" cy="334.8" r="0.900" fill="#fefefe"/>
<circle cx="538.5" cy="337" r="0.900" fill="#c9c9c9"/><circle cx="538" cy="336.4" r="0.900" fill="#fefefe"/>
</svg>
<div class="tl" style="left:480.3px;top:349.00px;font-size:20px;color:#fefefe;font-weight:bold;transform:translate(0,-50%) scaleX(0.890);transform-origin:0 50%;text-shadow:0.800px 0.900px 0.500px #b4b4b4;">PConline</div>
<div class="tl" style="left:557.5px;top:352.90px;font-size:6px;color:#fefefe;font-style:italic;font-weight:bold;text-shadow:0.500px 0.600px 0.400px #b4b4b4;">.com.cn</div>
<div class="tl" style="left:478.5px;top:364.70px;font-size:9.5px;color:#fefefe;font-weight:bold;letter-spacing:3.100px;transform:translate(0,-50%) scaleX(1.370);transform-origin:0 50%;text-shadow:0.800px 0.900px 0.500px #b4b4b4;">太平洋电脑网</div>
<div class="abs" style="left:0px;top:383.5px;width:600px;height:0.6px;background:#e0e0e0;"></div>
<div class="t" style="left:40.5px;top:392.90px;font-size:5.5px;color:#444;">Page-1</div>
<div class="t" style="left:98px;top:392.90px;font-size:5.5px;color:#111;font-weight:bold;">Page-1</div>
<div class="t" style="left:546.3px;top:392.80px;font-size:5.8px;color:#111;">70%</div>
<div class="abs" style="left:79.5px;top:386.5px;width:0.6px;height:11px;background:#dcdcdc;"></div>
<svg width="600" height="400" viewBox="0 0 600 400" fill="none" stroke="#222" stroke-width="0.800" stroke-linecap="round" stroke-linejoin="round">
<rect x="11.600" y="389.600" width="6" height="4.600"/><path d="M10 389.600v4.600M19.200 389.600v4.600" stroke-width="0.700"/>
<path d="M74 391.200h2.200l-1.100 1.300z" fill="#777" stroke="none"/>
<path d="M120 392.200h3.600M121.800 390.400v3.600"/>
<circle cx="470" cy="391.500" r="3.300" stroke-width="0.900"/><path d="M469.100 389.900l2.500 1.600-2.500 1.600z" fill="#222" stroke-width="0.300"/>
<path d="M479.800 391.700h2.800" stroke-width="1"/><path d="M528.600 391.700h3.200M530.200 390.100v3.200" stroke-width="0.900"/>
<path d="M487 391.700h38.500" stroke="#c4c4c4" stroke-width="0.800"/><path d="M487 391.700h6" stroke="#666" stroke-width="0.800"/><circle cx="494.200" cy="391.700" r="1.900" fill="#fff" stroke="#777" stroke-width="0.600"/>
<path d="M557.200 391.200h1.800l-0.900 1z" fill="#666" stroke="none"/>
<path d="M568.600 390.400v-1.400h1.400M572.200 389h1.400v1.400M573.600 393v1.400h-1.400M570 394.400h-1.400v-1.400" stroke-width="0.900"/>
<rect x="579" y="388.600" width="6.800" height="5.800" rx="0.500" stroke-width="1"/><path d="M580.600 391.500h3.600" stroke-width="1.100"/>
</svg>
<svg width="600" height="400" viewBox="0 0 600 400" fill="none" font-family="'Liberation Sans','Noto Sans CJK SC',sans-serif">
<g stroke="#6a6a6a" stroke-width="0.450">
<path d="M178 224 C 198 214 189.147 113.1 218 113.1"/>
<path d="M178 224 C 198 214 195.675 151.5 218 151.5"/>
<path d="M178 224 C 198 214 201.115 183.5 218 183.5"/>
<path d="M198 224 L218 221.5"/>
<path d="M178 224 C 198 234 199.806 272.2 218 272.2"/>
<path d="M178 224 C 198 234 190.218 328.6 218 328.6"/>
</g>
<rect x="157.500" y="213.700" width="40" height="20.200" rx="1.600" fill="#3551b5"/>
<text x="177.5" y="226.23" font-size="6.2" fill="#fff" text-anchor="middle">网络营销</text>
<circle cx="200.500" cy="224" r="1.700" fill="#9ccc65" stroke="#6fa044" stroke-width="0.400"/>
<rect x="218" y="106.7" width="34" height="12.800" rx="0.800" fill="#c5e0b3"/>
<text x="235" y="114.90" font-size="5" fill="#222" text-anchor="middle">营销计划</text>
<path d="M252.8 113.1l1.800-1.800 1.800 1.800-1.800 1.800z" fill="#b7dc9c" stroke="#6fa044" stroke-width="0.400"/>
<path d="M256 113.1 C 258 113.1 257 105.2 259.6 105.2 H310" stroke="#6a6a6a" stroke-width="0.450"/>
<text x="264.9" y="102.27" font-size="4.35" fill="#4a4a4a">网络营销的学习和准备</text>
<path d="M256 113.1 C 258 113.1 257 118 259.6 118 H297.5" stroke="#6a6a6a" stroke-width="0.450"/>
<text x="264.9" y="115.07" font-size="4.35" fill="#4a4a4a">学习成功的模式</text>
<path d="M256 113.1 C 258 113.1 257 130.2 259.6 130.2 H285" stroke="#6a6a6a" stroke-width="0.450"/>
<text x="264.9" y="127.27" font-size="4.35" fill="#4a4a4a">创意策划</text>
<rect x="218" y="145.1" width="34" height="12.800" rx="0.800" fill="#c5e0b3"/>
<text x="235" y="153.30" font-size="5" fill="#222" text-anchor="middle">营销团队</text>
<path d="M252.8 151.5l1.800-1.800 1.800 1.800-1.800 1.800z" fill="#b7dc9c" stroke="#6fa044" stroke-width="0.400"/>
<path d="M256 151.5 C 258 151.5 257 150.2 259.6 150.2 H302" stroke="#6a6a6a" stroke-width="0.450"/>
<text x="264.9" y="147.27" font-size="4.35" fill="#4a4a4a">网络营销团队构建</text>
<path d="M256 151.5 C 258 151.5 257 162.5 259.6 162.5 H302" stroke="#6a6a6a" stroke-width="0.450"/>
<text x="264.9" y="159.57" font-size="4.35" fill="#4a4a4a">网络营销团队管理</text>
<rect x="218" y="177.1" width="34" height="12.800" rx="0.800" fill="#c5e0b3"/>
<text x="235" y="185.30" font-size="5" fill="#222" text-anchor="middle">服务系统</text>
<path d="M252.8 183.5l1.800-1.800 1.800 1.800-1.800 1.800z" fill="#b7dc9c" stroke="#6fa044" stroke-width="0.400"/>
<path d="M256 183.5 C 258 183.5 257 182.5 259.6 182.5 H313.7" stroke="#6a6a6a" stroke-width="0.450"/>
<text x="264.9" y="179.57" font-size="4.35" fill="#4a4a4a">建立明确的售后服务体系</text>
<path d="M256 183.5 C 258 183.5 257 193.8 259.6 193.8 H313.7" stroke="#6a6a6a" stroke-width="0.450"/>
<text x="264.9" y="190.87" font-size="4.35" fill="#4a4a4a">建设高效的客户服务部门</text>
<rect x="218" y="215.1" width="39" height="12.800" rx="0.800" fill="#c5e0b3"/>
<text x="237.5" y="223.30" font-size="5" fill="#222" text-anchor="middle">优化与提升</text>
<path d="M257.8 221.5l1.800-1.800 1.800 1.800-1.800 1.800z" fill="#b7dc9c" stroke="#6fa044" stroke-width="0.400"/>
<path d="M261 221.5 C 263 221.5 262 213.2 265.1 213.2 H293" stroke="#6a6a6a" stroke-width="0.450"/>
<text x="270.4" y="210.27" font-size="4.35" fill="#4a4a4a">关键词设置</text>
<path d="M261 221.5 C 263 221.5 262 226 265.1 226 H293" stroke="#6a6a6a" stroke-width="0.450"/>
<text x="270.4" y="223.07" font-size="4.35" fill="#4a4a4a">SEO和SEM</text>
<path d="M261 221.5 C 263 221.5 262 238.2 265.1 238.2 H308" stroke="#6a6a6a" stroke-width="0.450"/>
<text x="270.4" y="235.27" font-size="4.35" fill="#4a4a4a" textLength="33.500" lengthAdjust="spacingAndGlyphs">B2B, B2C, C2C分析</text>
<rect x="218" y="265.8" width="34" height="12.800" rx="0.800" fill="#c5e0b3"/>
<text x="235" y="274.00" font-size="5" fill="#222" text-anchor="middle">品牌塑造</text>
<path d="M252.8 272.2l1.800-1.800 1.800 1.800-1.800 1.800z" fill="#b7dc9c" stroke="#6fa044" stroke-width="0.400"/>
<path d="M256 272.2 C 258 272.2 257 258 259.6 258 H285" stroke="#6a6a6a" stroke-width="0.450"/>
<text x="264.9" y="255.07" font-size="4.35" fill="#4a4a4a">口碑营销</text>
<path d="M256 272.2 C 258 272.2 257 270.5 259.6 270.5 H285" stroke="#6a6a6a" stroke-width="0.450"/>
<text x="264.9" y="267.57" font-size="4.35" fill="#4a4a4a">品牌营销</text>
<path d="M256 272.2 C 258 272.2 257 282.7 259.6 282.7 H285" stroke="#6a6a6a" stroke-width="0.450"/>
<text x="264.9" y="279.77" font-size="4.35" fill="#4a4a4a">差异化战略</text>
<path d="M256 272.2 C 258 272.2 257 295 259.6 295 H293" stroke="#6a6a6a" stroke-width="0.450"/>
<text x="264.9" y="292.07" font-size="4.35" fill="#4a4a4a">独立网站分析</text>
<rect x="218" y="322.2" width="34" height="12.800" rx="0.800" fill="#c5e0b3"/>
<text x="235" y="330.40" font-size="5" fill="#222" text-anchor="middle">营销网站</text>
<path d="M252.8 328.6l1.800-1.800 1.800 1.800-1.800 1.800z" fill="#b7dc9c" stroke="#6fa044" stroke-width="0.400"/>
<path d="M256 328.6 C 258 328.6 257 314.3 259.6 314.3 H285" stroke="#6a6a6a" stroke-width="0.450"/>
<text x="264.9" y="311.37" font-size="4.35" fill="#4a4a4a">网站定位</text>
<path d="M256 328.6 C 258 328.6 257 327.3 259.6 327.3 H285" stroke="#6a6a6a" stroke-width="0.450"/>
<text x="264.9" y="324.37" font-size="4.35" fill="#4a4a4a">网站设计</text>
<path d="M256 328.6 C 258 328.6 257 338.7 259.6 338.7 H285" stroke="#6a6a6a" stroke-width="0.450"/>
<text x="264.9" y="335.77" font-size="4.35" fill="#4a4a4a">网站管理</text>
<path d="M256 328.6 C 258 328.6 257 352 259.6 352 H301.7" stroke="#6a6a6a" stroke-width="0.450"/>
<text x="264.9" y="349.07" font-size="4.35" fill="#4a4a4a">设计客户反馈渠道</text>
<rect x="382.400" y="152.8" width="48.200" height="22" rx="3" fill="#7fd05a"/>
<text x="406.5" y="165.31" font-size="4.2" fill="#222" text-anchor="middle">优质产品</text>
<path d="M404.200 177.8h4.600v4.200h2.800l-5.100 5-5.100-5h2.800z" fill="#c8e6b4"/>
<rect x="382.400" y="188.65" width="48.200" height="22" rx="3" fill="#7fd05a"/>
<text x="406.5" y="201.16" font-size="4.2" fill="#222" text-anchor="middle">精确信息</text>
<path d="M404.200 213.65h4.600v4.200h2.800l-5.100 5-5.100-5h2.800z" fill="#c8e6b4"/>
<rect x="382.400" y="224.5" width="48.200" height="22" rx="3" fill="#7fd05a"/>
<text x="406.5" y="237.01" font-size="4.2" fill="#222" text-anchor="middle">通讯渠道</text>
<path d="M404.200 249.5h4.600v4.200h2.800l-5.100 5-5.100-5h2.800z" fill="#c8e6b4"/>
<rect x="382.400" y="260.35" width="48.200" height="22" rx="3" fill="#7fd05a"/>
<text x="406.5" y="272.86" font-size="4.2" fill="#222" text-anchor="middle">网络会员</text>
<path d="M404.200 285.35h4.600v4.200h2.800l-5.100 5-5.100-5h2.800z" fill="#c8e6b4"/>
<rect x="382.400" y="296.2" width="48.200" height="22" rx="3" fill="#7fd05a"/>
<text x="406.5" y="308.71" font-size="4.2" fill="#222" text-anchor="middle">搜索引擎优化</text>
<g>
<rect x="143.700" y="175.400" width="27.800" height="18.600" fill="#fff" stroke="#27508f" stroke-width="0.600"/>
<rect x="143.300" y="174.500" width="28.600" height="1.700" fill="#2a66b8"/>
<path d="M149.800 191.500l3-2.300h5.800l5.800-6" stroke="#2a6abf" stroke-width="1.100"/>
<path d="M166 184.400l7.200 5.200" stroke="#3a76c8" stroke-width="0.500"/>
<circle cx="177.200" cy="183" r="2.800" fill="#f5d6a8"/>
<rect x="176.300" y="185" width="1.800" height="1.600" fill="#f5d6a8"/>
<path d="M173.600 186.600h7.400l0.400 8h-8.200z" fill="#2fa8a2"/>
<path d="M176.200 186.600h2.200l-1.100 3z" fill="#e8f4f2"/>
<path d="M173.400 187.400v5.500" stroke="#f5d6a8" stroke-width="1.300"/><path d="M173.400 187.200v2.400" stroke="#2fa8a2" stroke-width="1.500"/>
<path d="M181.200 187.400v6" stroke="#f5d6a8" stroke-width="1.300"/><path d="M181.200 187.200v2.400" stroke="#2fa8a2" stroke-width="1.500"/>
<path d="M174.600 194.600h5.600v18.800h-2.300l-0.500-15.600-0.500 15.600h-2.300z" fill="#2b2b2b"/>
<circle cx="135.6" cy="192.300" r="2.300" fill="#f5d6a8"/>
<rect x="131.3" y="194.600" width="9.400" height="3.600" rx="1.200" fill="#3aa565"/>
<rect x="131" y="197" width="10" height="11" fill="#dbb37d"/>
<circle cx="146.2" cy="192.300" r="2.300" fill="#f5d6a8"/>
<rect x="142.4" y="194.600" width="9.400" height="3.600" rx="1.200" fill="#e0575a"/>
<rect x="142.1" y="197" width="10" height="11" fill="#dbb37d"/>
<circle cx="157.2" cy="192.300" r="2.300" fill="#f5d6a8"/>
<rect x="153.5" y="194.600" width="9.400" height="3.600" rx="1.200" fill="#8ec5e6"/>
<rect x="153.2" y="197" width="10" height="11" fill="#dbb37d"/>
<rect x="119.300" y="197.600" width="2" height="9.600" fill="#dbb37d"/><rect x="119.300" y="205.600" width="6.500" height="1.800" fill="#dbb37d"/>
<circle cx="122.900" cy="192.400" r="2.300" fill="#f5d6a8"/>
<path d="M121 195.200h3.800l0.800 8.600h-4.800z" fill="#2fa8a2"/>
<path d="M124.600 199.200l4 2.200" stroke="#f5d6a8" stroke-width="1.100"/>
<path d="M121.600 203.800l7.200 1v9h-1.800v-7l-5.400-0.800z" fill="#2b2b2b"/><path d="M127 213.800h2.800" stroke="#2b2b2b" stroke-width="1"/>
</g>
</svg>
</body></html>
